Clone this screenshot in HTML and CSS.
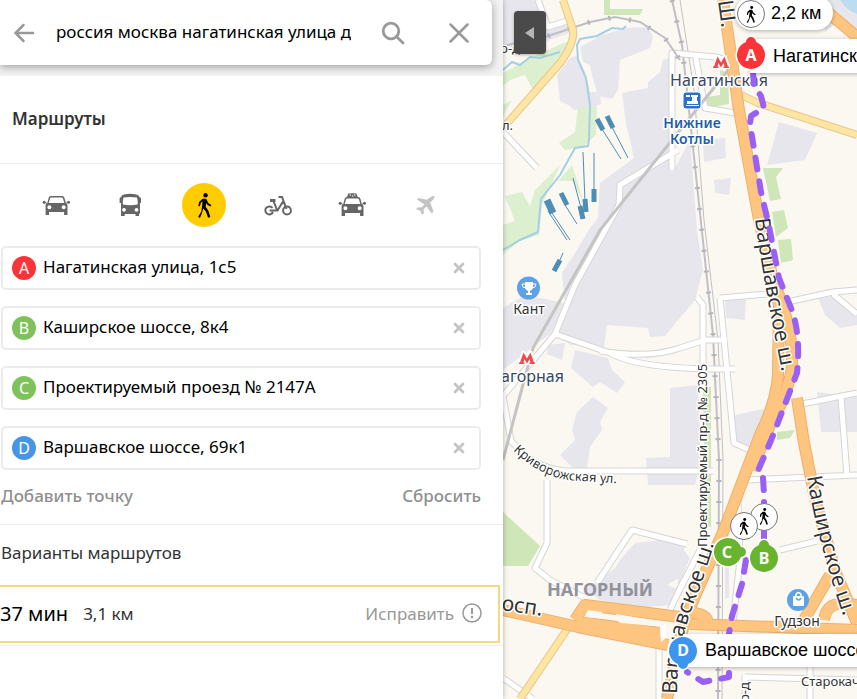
FILE: index.html
```
<!DOCTYPE html>
<html lang="ru">
<head>
    <meta charset="utf-8">
    <meta name="viewport" content="width=device-width, initial-scale=1">
    <title>Маршруты</title>
    <link rel="stylesheet" href="styles.css">
</head>
<body>
    <svg class="sprite" aria-hidden="true">
        <symbol id="walk" viewBox="0 0 14 24">
            <circle cx="8" cy="2.2" r="2.1"/>
            <path d="M5.2 5.4h3.4l.6 1.2 1.6 3.2 2.8 1.8-.8 1.4-3.2-1.8-.9-1.6-.6 3.6 2.5 3.6 2 6.2-2.1.8-2.2-6-2.6-3-1 4.2L2.600 24l-1.700-1.200L3.900 18l1-7.600.2-2.200-1.700 1.400-.7 3.200-1.600-.3.700-3.900z"/>
        </symbol>
        <symbol id="cross" viewBox="0 0 12 12">
            <path d="M2 2l8 8M10 2l-8 8" fill="none" stroke="currentColor" stroke-width="2.800" stroke-linecap="round"/>
        </symbol>
        <symbol id="car" viewBox="0 0 28 24">
            <path fill-rule="evenodd" d="M9 3h11q2 0 2.500 2l1.400 5.200 1.600 1.500V22h-3.400v-3H7v3H3.600V11.700l1.600-1.500L6.600 5Q7.100 3 9 3zM9.300 4.400q-1 0-1.300 1L6.700 10h15.600L21 5.400q-.300-1-1.300-1zM7.400 12.200a2 2 0 1 0 .01 0zM21.700 12.200a2 2 0 1 0 .01 0z"/>
            <circle cx="2.200" cy="9.300" r="1.500"/><circle cx="26.500" cy="9.300" r="1.500"/>
            <path d="M2 9l3 1.500M26.500 9l-3 1.500" stroke="currentColor"/>
        </symbol>
        <symbol id="metro" viewBox="0 0 18 14">
            <path d="M1 11.500h1L5.500 1.500 9 7.500l3.500-6L16 11.500h1V13h-5.500v-1.500h1l-.900-3.500L9 12.500 6.400 8l-.900 3.500h1V13H1z" fill="#f04a4a" stroke="#fff" stroke-width="4" paint-order="stroke"/>
        </symbol>
    </svg>

    <div class="layout">
        <aside class="panel">
            <div class="top">
                <form class="search">
                    <button type="button" class="icon-btn back" aria-label="Назад">
                        <svg width="22" height="20" viewBox="0 0 22 20"><path d="M20 10H3M10.500 2L2.500 10l8 8" fill="none" stroke="currentColor" stroke-width="2.500" stroke-linecap="round"/></svg>
                    </button>
                    <input type="text" class="query" aria-label="Поиск" value="россия москва нагатинская улица д">
                    <button type="button" class="icon-btn find" aria-label="Найти">
                        <svg width="24" height="24" viewBox="0 0 24 24"><circle cx="10" cy="10" r="7.800" fill="none" stroke="currentColor" stroke-width="2.800"/><path d="M15.500 15.500l6.500 6.500" stroke="currentColor" stroke-width="2.800" stroke-linecap="round"/></svg>
                    </button>
                    <button type="button" class="icon-btn" aria-label="Закрыть">
                        <svg width="22" height="22" viewBox="0 0 22 22"><path d="M2.500 2.500l17 17M19.500 2.500l-17 17" stroke="currentColor" stroke-width="2.500" stroke-linecap="round"/></svg>
                    </button>
                </form>
            </div>

            <h1 class="title">Маршруты</h1>

            <div class="modes">
                <button type="button" class="mode" aria-label="Авто"><svg width="28" height="24"><use href="#car"/></svg></button>
                <button type="button" class="mode" aria-label="Автобус">
                    <svg width="28" height="24" viewBox="0 0 28 24"><path fill-rule="evenodd" d="M8 1.500q6-1.500 12.500 0Q23 2 23.500 4l1.500 1v5h-1v10.500h-1V23h-3.500v-2H8.700v2H5V10H3.600V5L5 4q.300-2 3-2.500zM7.500 4.500Q6.300 10 7 11.500q7 1.500 14.500 0 .7-1.500-.5-7-7-1-13.500 0zM8 15a1.900 1.900 0 1 0 .01 0zM20.500 15a1.900 1.900 0 1 0 .01 0z"/></svg>
                </button>
                <button type="button" class="mode active" aria-label="Пешком"><svg width="15" height="25"><use href="#walk"/></svg></button>
                <button type="button" class="mode" aria-label="Велосипед">
                    <svg width="28" height="24" viewBox="0 0 28 24">
                        <g fill="none" stroke="currentColor" stroke-width="2">
                            <circle cx="23" cy="17.500" r="3.900"/>
                            <path d="M8.500 15a4 4 0 1 0 .5 4M14.500 4h3.500l4.500 12M19 8.500l-5.500 9H5.500M9.500 8l3.500 9"/>
                            <path d="M6 7.500h5.500" stroke-width="3"/>
                        </g>
                    </svg>
                </button>
                <button type="button" class="mode" aria-label="Такси">
                    <svg width="28" height="24" viewBox="0 0 28 24"><use href="#car" width="28" height="24" y="1"/><path d="M9 4l1.200-3.500Q14 0 18.500.5L19.700 4z"/><path d="M11.500 2h1.500M14 3h1.500M16 2h1.500" stroke="#fff"/></svg>
                </button>
                <button type="button" class="mode disabled" aria-label="Самолёт" disabled>
                    <svg width="28" height="24" viewBox="0 0 28 24"><path d="M21 3q2-.8 1.500 1.200-.5 1.800-4.300 5.300l3.300 9-1.800 2-5.200-7-3 3 .5 3.500-2 2-1.600-4.300-4.400-1.500 2-2 3.400.4 3-3-7.400-5L6.500 5l8.300 1.800Q19 3.600 21 3z"/></svg>
                </button>
            </div>

            <ul class="points">
                <li class="point">
                    <label class="badge red" for="pa">A</label>
                    <input type="text" id="pa" value="Нагатинская улица, 1с5">
                    <button type="button" class="remove" aria-label="Удалить"><svg width="12" height="12"><use href="#cross"/></svg></button>
                </li>
                <li class="point">
                    <label class="badge green-bg" for="pb">B</label>
                    <input type="text" id="pb" value="Каширское шоссе, 8к4">
                    <button type="button" class="remove" aria-label="Удалить"><svg width="12" height="12"><use href="#cross"/></svg></button>
                </li>
                <li class="point">
                    <label class="badge green-bg" for="pc">C</label>
                    <input type="text" id="pc" value="Проектируемый проезд № 2147А">
                    <button type="button" class="remove" aria-label="Удалить"><svg width="12" height="12"><use href="#cross"/></svg></button>
                </li>
                <li class="point">
                    <label class="badge blue" for="pd">D</label>
                    <input type="text" id="pd" value="Варшавское шоссе, 69к1">
                    <button type="button" class="remove" aria-label="Удалить"><svg width="12" height="12"><use href="#cross"/></svg></button>
                </li>
            </ul>

            <div class="actions">
                <button type="button" class="text-btn">Добавить точку</button>
                <button type="button" class="text-btn">Сбросить</button>
            </div>

            <h2 class="variants">Варианты маршрутов</h2>
            <div class="routes">
                <div class="route">
                    <span class="time">37 мин</span>
                    <span class="length">3,1 км</span>
                    <a href="#" class="fix">Исправить
                        <svg width="20" height="20" viewBox="0 0 20 20"><circle cx="10" cy="10" r="9" fill="none" stroke="currentColor" stroke-width="1.500"/><path d="M10 5v6" stroke="currentColor" stroke-width="2"/><circle cx="10" cy="14" r="1.300" fill="currentColor"/></svg>
                    </a>
                </div>
            </div>
        </aside>

        <main class="map">
            <svg class="canvas" viewBox="503 0 354 699" preserveAspectRatio="xMinYMin slice">
                <defs>
                    <path id="p-varsh-top" d="M755 219Q762 275 782 372L785 390"/>
                    <path id="p-varsh-low" d="M677 694Q677 640 700 588L714 545 720 530"/>
                    <path id="p-kash" d="M807 477Q817 540 843 615l3 8"/>
                    <path id="p-kriv" d="M513 450Q542 480 580 481L630 484"/>
                </defs>

                <g class="blocks">
                    <path d="M503 0h36l9 27 20-6 3 11-21 8-47 10z"/>
                    <path d="M580 47l20-11 25-8 23-1 5 10-3 11-30 12-2 30-6 9-14-3-6-21-2-10-7-3z"/>
                    <path d="M557 75l13-17 7-3 8 17 5 20h10l1 12-11 4-16 2-4-4-10-5z"/>
                    <path d="M622 93l15-3 11-2v-6l12-10 3-12 9-3 2 113 16-30 7 90 6 40-8 30-15 18-15 18-15 1-2-9-41-3-3 22-34-2-15-15-52 40v-62l17-10h20l25 5-3-30 13-20 15-25 8-10 2-35 34-25-8-35z"/>
                    <path d="M548 345l17-2-3 17-15-6zM575 350l33 8 4 12 13 12-8 11-17-11-7 5-22-19zM593 397l15 11-8 14 2 8-12 17-3 21-12 2-15-15 15-15-3-10 5-18z"/>
                    <path d="M670 388l28-3 3 75-6 25h-47l-2-27 24-1z"/>
                    <path d="M635 543l27-3 22 5v30l-17 10 13 5-10 15-30 3-40-8-15-10 30-22 5-8z"/>
                    <path d="M779 122l38 11-12 27-38 5zM703 140l22-2 1 20-22 4zM714 180l17-2-2 17-14-2zM725 300l21-2-1 22-19-2zM818 298l17-2 22 16v13l-17 3-15-13zM735 415l28-6 12 3-25 33h-15zM817 392l40 5v35h-36zM825 32l15-12 17 18V0h-35zM690 558l-12 30v-45zM725 558h4v40h-4z"/>
                </g>
                <g class="green">
                    <path class="pale" d="M503 73l27-15 36-16 4 6-15 17-22 25-8-15-15 5-7 6zM578 108l19-2-1 29-13 12-18 3-6-7 16-11zM572 165l12 38-12-22-14 0zM505 196l17-4 8 14 5-16 25-25-18 40-3 30-20 6-16 14v-30l12-4zM503 105l9-5-9 16z"/>
                    <path d="M604 0h6v9l33 0-3 6h-36zM503 512l37 34-12 20h-25zM763 168h20l-7 9 5 22-11 2zM772 212l12-2 4 18-12 9zM778 240l13-1 2 21-12 3zM720 70l8 2 1 32-22 4v-11l13-2zM777 432l18-2-5 8-13 2zM703 387h8v140h-5z"/>
                </g>
                <path d="M840 0h17v14q-10-3-17-14z" fill="#bcdcf0"/>
                <path class="river" d="M626 26l-3 3-11-1-15 8-17 3-3 6 1 15 8 18 4 27-1 35-1 6-13 2-15 27-19 24-3 33-18 8-17 10M503 70l9-8 8 3 10-8 10 1 20-6"/>
                <g class="dock">
                    <path stroke-width="5" d="M597 119l6 11M607 116l6 12M561 193l6 12M580 206l3 13M585 199l1 13M594 189v13M560 260l-6 11"/>
                    <path stroke-width="7" d="M547 200l6 13"/>
                    <path stroke-width="1" d="M602 129l19 30M612 127l16 31M550 210l20 30M548 211l19 29M565 205l12 19M573 178l8 30M583 152l2 50M594 153v40M563 253l-4 9"/>
                </g>

                <path class="rail" d="M672 0l10 45 15 140 16 150 6 125-1 239"/>
                <path class="rail thin" d="M680 0l14 90 10 130 14 120 5 120-1 239"/>
                <path class="ties" d="M672 0l10 45 15 140 16 150 6 125-1 239"/>

                <g class="road-edge">
                    <path id="white" d="M538 0l10 27 22-7M503 132l34 36M672 170V53l43 4 25 6M695 53l10 55 30 5M678 150l-58 35-1 20-44 80-20 49-52 62 8 45 9 9q17 18 45 21l148 0M555 334l55 19q30 17 125 16M600 351q50 8 80-3l25-8 22 0M547 480v63l-12 25 15 12 33 17M597 583l35-53 55 14M697 297l6 8v85M720 298l48-4M720 298l14 145 20 9M787 302l46-10 24-2M833 294l24 20M797 405l60-12M841 397l6 79M677 595l23-45M745 480l112-5M780 550l37-9M738 500l2 60-7 62 5 8M503 678l30 21M659 648v51M745 677l112 3M745 675v24M810 665v34M670 610l14-30"/>
                </g>
                <use href="#white" class="road-white"/>
                <path class="rail metro-line" d="M503 460l22-83 8-29 67-118 80-100 58-72"/>
                <path class="rail" d="M503 46l45-10 42-14 25-5 25 5 25 16 15 22"/>
                <path class="ties" d="M548 36l42-14 25-5 25 5 25 16 15 22"/>
                <path class="yellow-edge" d="M563 0l10 30q2 12-12 32l-58 66M741 95l17 8 99 32M570 625l-50 74"/>
                <path class="yellow-road" d="M563 0l10 30q2 12-12 32l-58 66M741 95l17 8 99 32M570 625l-50 74"/>

                <g class="orange-edge">
                    <path id="orange" d="M723 0l16 110 20 110 20 85-1 70q-2 28-18 60l-36 95-22 50q-18 40-22 60l-13 59M777 290q16 40 15 75-2 25-22 60l-18 45M797 398l7 45 12 60 20 70 21 50M813 0l50 42M503 610l75 17 90 18M575 620l10-15 95 12M580 622l80 11M590 629l70 9M690 624l167 6M830 575l-26 45M860 606C838 600 826 604 824 620M683 612q25 0 25 12"/>
                </g>
                <use href="#orange" class="orange-road"/>
                <path d="M588 610l14 2 3 7-21-2zM616 614l48 8v5l-43-4q-9-3-5-9z" class="island"/>
                <path d="M660 627l6-3v14l-5 4z" fill="#fff"/>

                <g class="label halo">
                    <text x="670" y="86" class="station">Нагатинская</text>
                    <text x="501" y="382" class="station">агорная</text>
                    <text x="692" y="128" class="rail-name">Нижние</text>
                    <text x="692" y="144" class="rail-name">Котлы</text>
                    <text x="529" y="314" class="place">Кант</text>
                    <text x="797" y="626" class="place">Гудзон</text>
                    <text x="801" y="686" class="street">Старокачаловская</text>
                    <text x="547" y="596" class="district">НАГОРНЫЙ</text>
                    <text class="big"><textPath href="#p-varsh-top">Варшавское ш.</textPath></text>
                    <text class="big"><textPath href="#p-varsh-low">Варшавское ш.</textPath></text>
                    <text class="big"><textPath href="#p-kash">Каширское ш.</textPath></text>
                    <text class="street"><textPath href="#p-kriv">Криворожская ул.</textPath></text>
                    <text class="street" transform="translate(707 547) rotate(-90)">Проектируемый пр-д № 2305</text>
                    <text class="big" transform="translate(718 1) rotate(82)">Ш.</text>
                    <text class="big" transform="translate(501 610) rotate(8)">осп.</text>
                    <text class="street" x="500" y="53">р-д</text>
                    <text class="street" x="496" y="130">ул.</text>
                    <text class="street" transform="translate(749 710) rotate(-90)">пр-д</text>
                </g>

                <use href="#metro" x="712" y="55" width="18" height="14"/>
                <use href="#metro" x="518" y="351" width="18" height="14"/>
                <rect x="683" y="92" width="18" height="17" rx="3" fill="#2a72c8" stroke="#fff"/>
                <path d="M686 95h4v2h-4zM691 95h7v2h-1v4h1v3h-11v-3h5v-4h-1zM686 105h13v1h-13z" fill="#fff"/>
                <circle cx="528.500" cy="288" r="11.500" fill="#5da2e8"/>
                <path d="M525 282h8v4q0 4-3 5v2h2v2h-6v-2h2v-2q-3-1-3-5z" fill="#fff"/>
                <path d="M525 284h-3q0 4 4 4M533 284h3q0 4-4 4" fill="none" stroke="#fff"/>
                <circle cx="798" cy="600" r="11" fill="#5da2e8"/>
                <rect x="793" y="596" width="11" height="10" rx="1" fill="#fff"/>
                <path d="M796 596v-1.500q2.500-4 5 0v1.500" fill="none" stroke="#fff" stroke-width="1.500"/>
                <path d="M796 598q2.500 4 5 0" fill="none" stroke="#5da2e8" stroke-width="1.500"/>

                <path class="track" d="M753 72l1 14 7 10 3 12-13 8-1 8 11 68 8 34 10 52 12 30q10 25 6 65l-25 65-15 35"/>
                <path class="track" d="M763 478l1 16v45M746 560l-4 24-10 32-6 35M729 673v4l-10 2-16 3-16-10"/>

                <g class="tip">
                    <rect x="735" y="-4" width="98" height="34" rx="17"/>
                    <rect x="750" y="39" width="120" height="34"/>
                    <rect x="683" y="634" width="190" height="33"/>
                </g>
                <g class="tip-text">
                    <text x="771" y="19">2,2 км</text>
                    <text x="773" y="62">Нагатинская улица, 1с5</text>
                    <text x="705" y="656">Варшавское шоссе, 69к1</text>
                </g>
                <g class="stop">
                    <circle cx="751" cy="14" r="13.500"/><use href="#walk" x="746" y="6" width="10" height="17"/>
                    <circle cx="764" cy="517" r="13.500"/><use href="#walk" x="759" y="508" width="10" height="17"/>
                    <circle cx="744" cy="526" r="13.500"/><use href="#walk" x="739" y="518" width="10" height="17"/>
                </g>
                <g class="pins">
                    <path fill="#fc3338" d="M746 42a5 5 0 1 1 10 0A14 14 0 1 1 746 42z"/>
                    <path fill="#69b42e" d="M759 545a5 5 0 1 1 10 0A14 14 0 1 1 759 545z"/>
                    <path fill="#69b42e" d="M741 547a5 5 0 1 1 0 10A14 14 0 1 1 741 547z"/>
                    <path fill="#3d96ee" d="M688 664a5 5 0 1 1-10 0A14 14 0 1 1 688 664z"/>
                    <text x="751" y="61">A</text>
                    <text x="764" y="564">B</text>
                    <text x="727" y="558">C</text>
                    <text x="683" y="656">D</text>
                </g>
            </svg>
            <button type="button" class="collapse" aria-label="Свернуть панель">
                <svg width="10" height="12" viewBox="0 0 10 12"><path d="M9 0v12L0 6z" fill="#b5b5b5"/></svg>
            </button>
        </main>
    </div>
</body>
</html>
```
FILE: styles.css
```
* {
    box-sizing: border-box;
}

body {
    margin: 0;
    font-family: "Noto Sans", "Open Sans", sans-serif;
    font-size: 17px;
    color: #000;
    background: #fff;
}

button, input {
    font: inherit;
    color: inherit;
    border: 0;
    padding: 0;
    background: none;
}

button {
    cursor: pointer;
}

svg {
    display: block;
    fill: currentColor;
}

.sprite {
    position: absolute;
    width: 0;
    height: 0;
}

.layout {
    display: grid;
    grid-template-columns: 503fr 354fr;
    min-height: 100vh;
}

/* left panel */
.panel {
    min-width: 0;
    background: #fff;
    box-shadow: 0 0 5px rgba(0, 0, 0, 0.3);
    z-index: 1;
}

.top {
    background: #f2f2f2;
    padding: 0 11px 11px 0;
    overflow: hidden;
}

.search {
    display: flex;
    align-items: center;
    height: 65px;
    padding-right: 11px;
    background: #fff;
    border-radius: 0 6px 6px 0;
    box-shadow: 0 2px 8px rgba(0, 0, 0, 0.35);
}

.icon-btn {
    display: flex;
    justify-content: center;
    flex: none;
    width: 44px;
    margin-left: 22px;
    color: #999;
}

.back {
    width: 48px;
    margin: 0 8px 0 0;
}

.find {
    margin-left: 20px;
}

.query {
    flex: 1;
    min-width: 0;
    padding-bottom: 2px;
}

.title {
    margin: 0;
    padding: 31px 12px 32px;
    border-bottom: 1px solid #ebebeb;
    font-size: 17px;
    line-height: 24px;
    font-weight: 600;
    color: #333;
}

.modes {
    display: flex;
    gap: 30px;
    padding: 19px 34px;
}

.mode {
    display: flex;
    align-items: center;
    justify-content: center;
    width: 44px;
    height: 44px;
    border-radius: 50%;
    color: #666;
}

.mode.active {
    background: #fc0;
    color: #000;
}

.mode.disabled {
    color: #c4c4c4;
}

.points {
    display: grid;
    gap: 16px;
    margin: 0;
    padding: 0 22px 0 1px;
    list-style: none;
}

.point {
    display: flex;
    align-items: center;
    gap: 7px;
    height: 44px;
    padding: 0 14px 0 9px;
    border: 2px solid #ebebeb;
    border-radius: 5px;
}

.point input {
    flex: 1;
    min-width: 0;
    padding-bottom: 3px;
}

.badge {
    width: 24px;
    height: 24px;
    border-radius: 50%;
    line-height: 24px;
    text-align: center;
    font-size: 16px;
    color: #fff;
}

.red { background: #fc3338; }
.green-bg { background: #7fc25c; }
.blue { background: #4796e6; }

.remove {
    color: #c4c4c4;
}

.actions {
    display: flex;
    justify-content: space-between;
    padding: 14px 22px 16px 1px;
    border-bottom: 1px solid #ebebeb;
    line-height: 24px;
}

.text-btn {
    font-weight: 500;
    color: #8f8f8f;
}

.variants {
    margin: 0;
    padding: 16px 1px 20px;
    font-size: 17px;
    line-height: 24px;
    font-weight: 400;
    color: #333;
}

.routes {
    padding: 0 3px 2px 0;
    border-bottom: 1px solid #ebebeb;
}

.route {
    display: flex;
    align-items: center;
    gap: 15px;
    height: 58px;
    padding: 0 16px 2px 0;
    border: 2px solid #f3da7d;
    border-left: 0;
}

.time {
    font-size: 20px;
}

.length {
    color: #333;
}

.fix {
    display: flex;
    align-items: center;
    gap: 8px;
    margin-left: auto;
    color: #999;
    text-decoration: none;
}

/* map */
.map {
    position: relative;
    min-width: 0;
    overflow: hidden;
    background: #fbf8f1;
}

.canvas {
    position: absolute;
    width: 100%;
    height: 100%;
}

.collapse {
    position: absolute;
    top: 11px;
    left: 11px;
    display: flex;
    align-items: center;
    justify-content: center;
    width: 32px;
    height: 43px;
    border-radius: 4px;
    background: #4a4a4a;
    box-shadow: 0 1px 3px rgba(0, 0, 0, 0.3);
}

.blocks { fill: #e7e6ed; }
.green { fill: #cfe6b8; }
.pale { fill: #dcefcf; }
.island { fill: #fbf8f1; }

.river {
    fill: none;
    stroke: #a5cfe3;
    stroke-width: 2px;
}

.dock {
    fill: none;
    stroke: #4e8db5;
}

.rail {
    fill: none;
    stroke: #c0bfc5;
    stroke-width: 2px;
}

.rail.thin {
    stroke-width: 1px;
}

.metro-line {
    stroke: #c4c4c4;
    stroke-width: 3px;
}

.ties {
    fill: none;
    stroke: #b5b4bc;
    stroke-width: 5px;
    stroke-dasharray: 2 19;
}

.road-edge, .road-white, .yellow-edge, .yellow-road, .orange-edge, .orange-road {
    fill: none;
    stroke-linejoin: round;
}

.road-edge {
    stroke: #d6d5d5;
    stroke-width: 7px;
}

.road-white {
    stroke: #fff;
    stroke-width: 5px;
}

.yellow-edge {
    stroke: #e9c58e;
    stroke-width: 8px;
}

.yellow-road {
    stroke: #fde5a2;
    stroke-width: 6px;
}

.orange-edge {
    stroke: #eeaf6c;
    stroke-width: 12px;
}

.orange-road {
    stroke: #fec580;
    stroke-width: 10px;
}

.label {
    fill: #333;
    stroke: #fff;
    stroke-width: 3px;
    stroke-linejoin: round;
    paint-order: stroke;
}

.station {
    font-size: 16px;
    fill: #37475f;
}

.rail-name {
    font-size: 14px;
    font-weight: 600;
    text-anchor: middle;
    fill: #1f5da5;
}

.place {
    font-size: 14px;
    text-anchor: middle;
}

.street { font-size: 13px; }
.big { font-size: 21px; }

.district {
    font-size: 18px;
    font-weight: 700;
    fill: #92929c;
    stroke: none;
}

.track {
    fill: none;
    stroke: #9a60f5;
    stroke-width: 6px;
    stroke-linecap: round;
    stroke-linejoin: round;
    stroke-dasharray: 12 12;
}

.tip {
    fill: #fff;
    filter: drop-shadow(0 1px 2px rgba(0, 0, 0, 0.3));
}

.tip-text {
    font-family: "Liberation Sans", Arial, sans-serif;
    font-size: 18px;
}

.stop circle {
    fill: #fff;
    stroke: #777;
}

.pins path {
    stroke: #fff;
    stroke-width: 3px;
    paint-order: stroke;
}

.pins text {
    font-size: 16px;
    font-weight: 700;
    text-anchor: middle;
    fill: #fff;
}
```
